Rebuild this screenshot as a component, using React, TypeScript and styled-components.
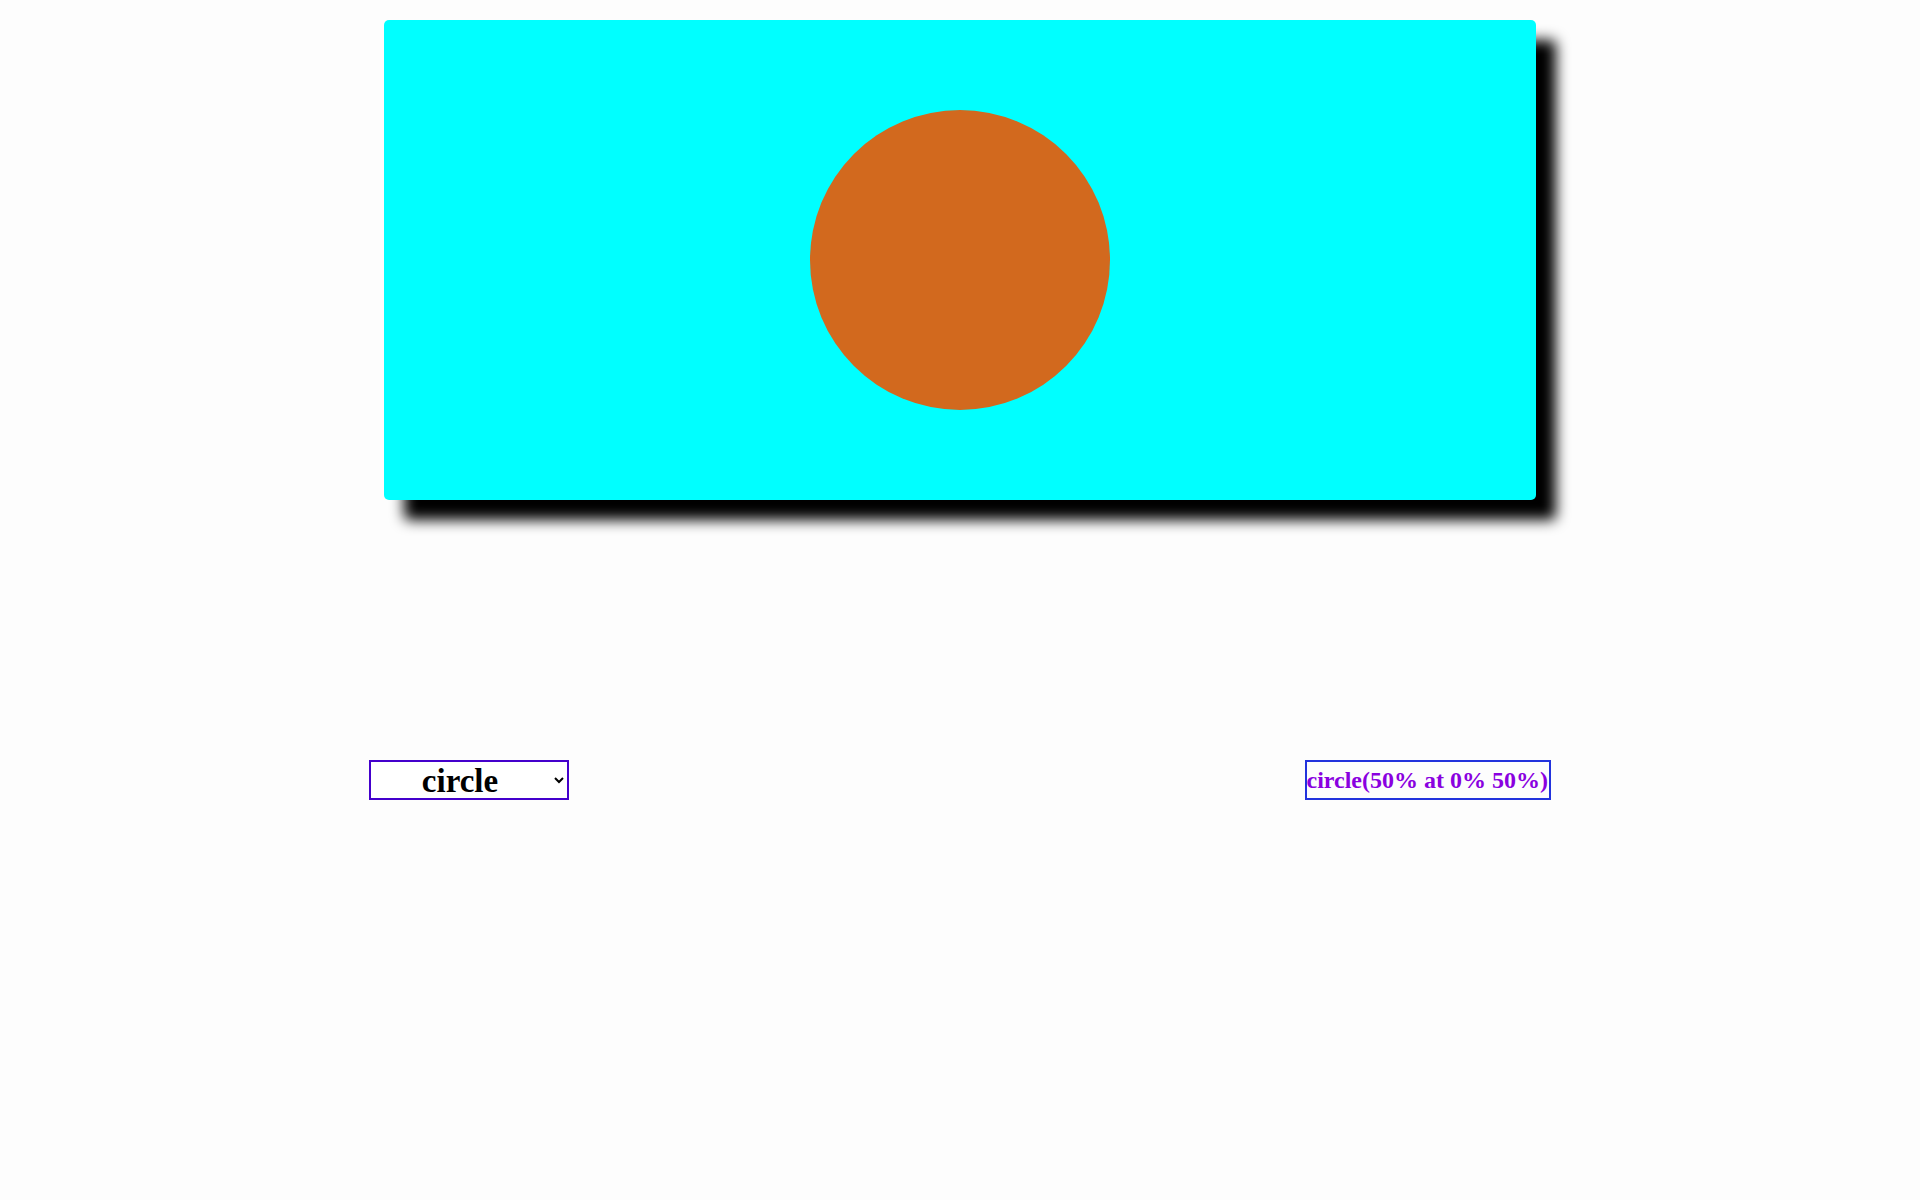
import React, { useState } from "react";
import styled, { createGlobalStyle } from "styled-components";

const Global = createGlobalStyle`
  html, body { margin: 0; padding: 0; background: #fdfdfd; }
  body { font-family: "Liberation Serif", "Times New Roman", serif; }
`;

const Page = styled.div`
  display: flex;
  flex-direction: column;
  align-items: center;
  padding-top: 20px;
  min-height: 1200px;
  box-sizing: border-box;
`;

const Stage = styled.div`
  width: 1152px;
  height: 480px;
  background: #00ffff;
  border-radius: 5px;
  box-shadow: 20px 20px 14px #000;
  display: flex;
  align-items: center;
  justify-content: center;
`;

const Shape = styled.div<{ $clip: string }>`
  width: 300px;
  height: 300px;
  background: #d2691e;
  clip-path: ${(p) => p.$clip};
`;

const Controls = styled.div`
  width: 1182px;
  margin-top: 260px;
  display: flex;
  justify-content: space-between;
  align-items: center;
`;

const Select = styled.select`
  width: 200px;
  height: 40px;
  box-sizing: border-box;
  border: 2px solid #4400cc;
  border-radius: 0;
  background: #fff;
  color: #000;
  font-family: "Liberation Serif", "Times New Roman", serif;
  font-weight: bold;
  font-size: 33px;
  text-align: center;
  text-align-last: center;
  padding: 0 6px 0 0;
  outline: none;
`;

const Output = styled.div`
  height: 40px;
  box-sizing: border-box;
  border: 2px solid #2233dd;
  padding: 0 1px 0 0;
  display: flex;
  align-items: center;
  color: #8a00e0;
  font-family: "Liberation Serif", "Times New Roman", serif;
  font-weight: bold;
  font-size: 24px;
  white-space: nowrap;
`;

const shapes: Record<string, { clip: string; label: string }> = {
  circle: { clip: "circle(50% at 50% 50%)", label: "circle(50% at 0% 50%)" },
  ellipse: { clip: "ellipse(50% 35% at 50% 50%)", label: "ellipse(50% 35% at 50% 50%)" },
  inset: { clip: "inset(10% 10% 10% 10%)", label: "inset(10% 10% 10% 10%)" },
  polygon: { clip: "polygon(50% 0, 100% 100%, 0 100%)", label: "polygon(50% 0, 100% 100%, 0 100%)" },
};

export default function App() {
  const [kind, setKind] = useState("circle");
  const s = shapes[kind];
  return (
    <>
      <Global />
      <Page>
        <Stage>
          <Shape $clip={s.clip} />
        </Stage>
        <Controls>
          <Select value={kind} onChange={(e) => setKind(e.target.value)}>
            {Object.keys(shapes).map((k) => (
              <option key={k} value={k}>
                {k}
              </option>
            ))}
          </Select>
          <Output>{s.label}</Output>
        </Controls>
      </Page>
    </>
  );
}
